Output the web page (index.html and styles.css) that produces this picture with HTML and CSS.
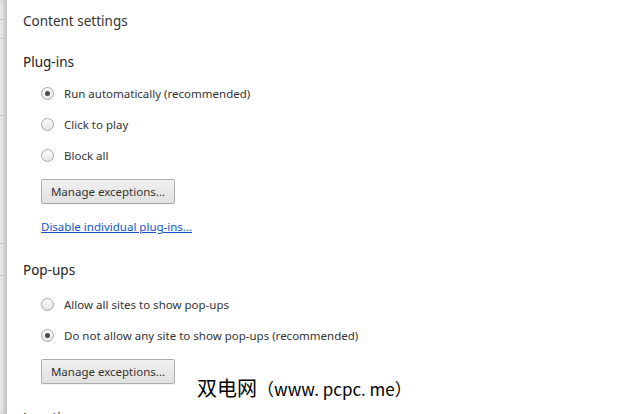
FILE: index.html
```html
<!DOCTYPE html>
<html lang="en">
<head>
    <meta charset="UTF-8">
    <title>Content settings</title>
    <link rel="stylesheet" href="styles.css">
</head>
<body>
    <div class="page">
        <div class="backdrop">
            <span class="rule r1"></span>
            <span class="rule r2"></span>
            <span class="rule r3"></span>
            <span class="rule r4"></span>
            <span class="rule r5"></span>
        </div>

        <div class="dialog">
            <h1>Content settings</h1>

            <section class="group">
                <h2>Plug-ins</h2>
                <label class="option"><span class="radio checked"></span>Run automatically (recommended)</label>
                <label class="option"><span class="radio"></span>Click to play</label>
                <label class="option"><span class="radio"></span>Block all</label>
                <button class="btn">Manage exceptions...</button>
                <a class="link" href="#">Disable individual plug-ins...</a>
            </section>

            <section class="group">
                <h2>Pop-ups</h2>
                <label class="option"><span class="radio"></span>Allow all sites to show pop-ups</label>
                <label class="option"><span class="radio checked"></span>Do not allow any site to show pop-ups (recommended)</label>
                <button class="btn">Manage exceptions...</button>
            </section>

            <section class="group">
                <h2>Location</h2>
            </section>
        </div>

        <div class="watermark">双电网<span class="latin">（www. pcpc. me）</span></div>
    </div>
</body>
</html>
```

FILE: styles.css
```css
body {
    margin: 0;
    font-family: 'Noto Sans', 'Open Sans', sans-serif;
    color: #333;
    background: #fff;
    overflow: hidden;
}

.page {
    display: flex;
    height: 414px;
    position: relative;
}

/* blurred settings page behind the overlay */
.backdrop {
    width: 7px;
    flex-shrink: 0;
    position: relative;
    background: linear-gradient(90deg, #ececec, #d9d9d9);
    box-shadow: inset -3px 0 4px rgba(0, 0, 0, 0.12);
}

.rule {
    position: absolute;
    left: 0;
    width: 7px;
    height: 1px;
    background: #c8c8c8;
}

.r1 { top: 19px; }
.r2 { top: 38px; }
.r3 { top: 115px; }
.r4 { top: 243px; }
.r5 { top: 275px; }

.dialog {
    flex: 1;
    padding: 11px 0 0 16px;
}

h1 {
    font-size: 13.5px;
    font-weight: normal;
    line-height: 20px;
    margin: 0 0 21px;
    color: #333;
}

h2 {
    font-size: 13.5px;
    font-weight: normal;
    line-height: 20px;
    margin: 0 0 6px;
    color: #222;
}

.group {
    margin-bottom: 24px;
}

.group + .group h2 {
    margin-bottom: 9px;
}

.option {
    display: flex;
    align-items: center;
    height: 31px;
    padding-left: 18px;
    font-size: 11.5px;
    color: #333;
}

.radio {
    width: 13px;
    height: 13px;
    border: 1px solid #a8a8a8;
    border-radius: 50%;
    background: linear-gradient(#fcfcfc, #e4e4e4);
    margin-right: 10px;
    box-sizing: border-box;
    display: flex;
    align-items: center;
    justify-content: center;
}

.radio.checked::after {
    content: '';
    width: 5px;
    height: 5px;
    border-radius: 50%;
    background: #4a4a4a;
}

.btn {
    display: block;
    margin: 8px 0 0 18px;
    height: 25px;
    width: 134px;
    padding: 0;
    font-family: inherit;
    font-size: 11.5px;
    color: #333;
    background: linear-gradient(#f0f0f0, #e0e0e0);
    border: 1px solid #acacac;
    border-radius: 2px;
    box-shadow: 0 1px 0 rgba(0, 0, 0, 0.06);
}

.link {
    display: inline-block;
    margin: 15px 0 0 18px;
    font-size: 11.5px;
    color: #1155cc;
}

.watermark {
    position: absolute;
    left: 197px;
    top: 376px;
    font-family: 'Noto Sans CJK SC', sans-serif;
    font-size: 20px;
    line-height: 24px;
    color: #000;
}

.watermark .latin {
    font-size: 17px;
}
```
